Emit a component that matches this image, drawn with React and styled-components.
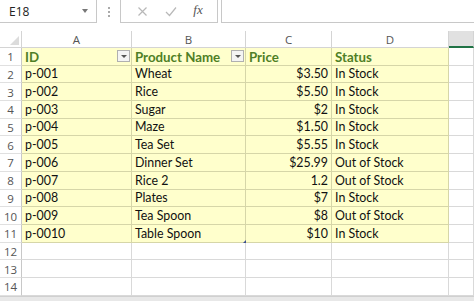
import React from "react";
import styled, { createGlobalStyle } from "styled-components";

const Global = createGlobalStyle`
  html, body { margin: 0; padding: 0; background: #fff; }
  body { width: 474px; height: 301px; overflow: hidden; font-family: Lato, "Open Sans", sans-serif; }
`;

const Page = styled.div`
  width: 474px;
  height: 301px;
  display: flex;
  flex-direction: column;
  background: #fff;
  overflow: hidden;
`;

const FormulaBar = styled.div`
  display: flex;
  height: 23px;
  flex: none;
  align-items: stretch;
`;

const NameBox = styled.div`
  width: 97px;
  display: flex;
  align-items: center;
  justify-content: space-between;
  padding: 0 8px 0 9px;
  box-sizing: border-box;
  border-right: 1px solid #c8c8c8;
  border-bottom: 1px solid #c8c8c8;
  font-family: "Open Sans", sans-serif;
  font-size: 12px;
  color: #222;
`;

const Caret = styled.span`
  width: 0;
  height: 0;
  border-left: 3.5px solid transparent;
  border-right: 3.5px solid transparent;
  border-top: 4px solid #777;
`;

const Dots = styled.div`
  width: 23px;
  display: flex;
  flex-direction: column;
  align-items: center;
  justify-content: center;
  gap: 2px;
  span { width: 2px; height: 2px; background: #aaa; }
`;

const Buttons = styled.div`
  width: 98px;
  display: flex;
  align-items: center;
  justify-content: space-around;
  padding: 0 6px 0 8px;
  box-sizing: border-box;
  border-left: 1px solid #c8c8c8;
  border-right: 1px solid #c8c8c8;
  border-bottom: 1px solid #c8c8c8;
`;

const Fx = styled.span`
  font-family: "Liberation Serif", serif;
  font-style: italic;
  font-size: 13px;
  color: #555;
  margin-top: -2px;
`;

const Input = styled.div`
  flex: 1;
  margin-left: 3px;
  border-left: 1px solid #c8c8c8;
  border-bottom: 1px solid #c8c8c8;
`;

const Grid = styled.div`
  margin-top: 8px;
  display: grid;
  grid-template-columns: 22px 110px 114px 86px 117px 1fr;
  grid-template-rows: 17px repeat(14, 17.7px);
  flex: none;
`;

const Corner = styled.div`
  position: relative;
  border-right: 1px solid #d4d4d4;
  border-bottom: 1px solid #d4d4d4;
  box-sizing: border-box;
  &::after {
    content: "";
    position: absolute;
    right: 2px;
    bottom: 2px;
    border-left: 9px solid transparent;
    border-bottom: 9px solid #dcdcdc;
  }
`;

const ColHead = styled.div`
  display: flex;
  align-items: center;
  justify-content: center;
  box-sizing: border-box;
  font-family: "Open Sans", sans-serif;
  font-size: 11.5px;
  color: #555;
  background: ${(p) => (p.$selected ? "#e1e1e1" : "#fff")};
  border-right: 1px solid #d4d4d4;
  border-bottom: ${(p) => (p.$selected ? "2px solid #217346" : "1px solid #d4d4d4")};
`;

const RowHead = styled.div`
  display: flex;
  align-items: center;
  justify-content: center;
  box-sizing: border-box;
  padding-top: 1px;
  font-family: "Open Sans", sans-serif;
  font-size: 11.5px;
  color: #555;
  border-right: 1px solid #c8c8c8;
  border-bottom: 1px solid #e0e0e0;
`;

const Cell = styled.div`
  position: relative;
  display: flex;
  align-items: flex-end;
  justify-content: ${(p) => (p.$right ? "flex-end" : "flex-start")};
  padding: 0 3px 0px;
  box-sizing: border-box;
  font-size: ${(p) => (p.$head ? "13.3px" : "12.4px")};
  line-height: 16px;
  white-space: nowrap;
  color: ${(p) => (p.$head ? "#4f7f26" : "#111")};
  font-weight: ${(p) => (p.$head ? 700 : 400)};
  background: ${(p) => (p.$fill ? "#ffffcc" : "#fff")};
  border-right: 1px solid ${(p) => (p.$fill ? "#d6d6a8" : "#d9d9d9")};
  border-bottom: 1px solid ${(p) => (p.$fill ? "#d6d6a8" : "#d9d9d9")};
  overflow: visible;
`;

const Filter = styled.span`
  position: absolute;
  right: 1px;
  top: 2px;
  width: 13px;
  height: 12px;
  box-sizing: border-box;
  border: 1px solid #b0b0b0;
  background: #f4f4f4;
  display: flex;
  align-items: center;
  justify-content: center;
  &::after {
    content: "";
    border-left: 3px solid transparent;
    border-right: 3px solid transparent;
    border-top: 3px solid #555;
  }
`;

const Handle = styled.span`
  position: absolute;
  right: -2px;
  bottom: -1px;
  width: 0;
  height: 0;
  border-left: 4px solid transparent;
  border-bottom: 4px solid #3b4f8f;
`;

const BottomBand = styled.div`
  flex: 1;
  background: #e8e8e8;
  border-top: 1px solid #d0d0d0;
`;

const rows = [
  ["p-001", "Wheat", "$3.50", "In Stock"],
  ["p-002", "Rice", "$5.50", "In Stock"],
  ["p-003", "Sugar", "$2", "In Stock"],
  ["p-004", "Maze", "$1.50", "In Stock"],
  ["p-005", "Tea Set", "$5.55", "In Stock"],
  ["p-006", "Dinner Set", "$25.99", "Out of Stock"],
  ["p-007", "Rice 2", "1.2", "Out of Stock"],
  ["p-008", "Plates", "$7", "In Stock"],
  ["p-009", "Tea Spoon", "$8", "Out of Stock"],
  ["p-0010", "Table Spoon", "$10", "In Stock"],
];

const XIcon = () => (
  <svg width="11" height="11" viewBox="0 0 11 11">
    <path d="M1.5 1.5 L9.5 9.5 M9.5 1.5 L1.5 9.5" stroke="#b8b8b8" strokeWidth="1.2" fill="none" />
  </svg>
);

const CheckIcon = () => (
  <svg width="12" height="11" viewBox="0 0 12 11">
    <path d="M1 6 L4.5 9.5 L11 1.5" stroke="#b8b8b8" strokeWidth="1.2" fill="none" />
  </svg>
);

export default function App() {
  return (
    <Page>
      <Global />
      <FormulaBar>
        <NameBox>
          <span>E18</span>
          <Caret />
        </NameBox>
        <Dots>
          <span />
          <span />
          <span />
        </Dots>
        <Buttons>
          <XIcon />
          <CheckIcon />
          <Fx>fx</Fx>
        </Buttons>
        <Input />
      </FormulaBar>
      <Grid>
        <Corner />
        <ColHead>A</ColHead>
        <ColHead>B</ColHead>
        <ColHead>C</ColHead>
        <ColHead>D</ColHead>
        <ColHead $selected />

        <RowHead>1</RowHead>
        <Cell $fill $head>
          ID
          <Filter />
        </Cell>
        <Cell $fill $head>
          Product Name
          <Filter />
        </Cell>
        <Cell $fill $head>Price</Cell>
        <Cell $fill $head>Status</Cell>
        <Cell />

        {rows.map((r, i) => (
          <React.Fragment key={i}>
            <RowHead>{i + 2}</RowHead>
            <Cell $fill>{r[0]}</Cell>
            <Cell $fill>
              {r[1]}
              {i === rows.length - 1 && <Handle />}
            </Cell>
            <Cell $fill $right>{r[2]}</Cell>
            <Cell $fill>{r[3]}</Cell>
            <Cell />
          </React.Fragment>
        ))}

        {[12, 13, 14].map((n) => (
          <React.Fragment key={n}>
            <RowHead>{n}</RowHead>
            <Cell />
            <Cell />
            <Cell />
            <Cell />
            <Cell />
          </React.Fragment>
        ))}
      </Grid>
      <BottomBand />
    </Page>
  );
}
